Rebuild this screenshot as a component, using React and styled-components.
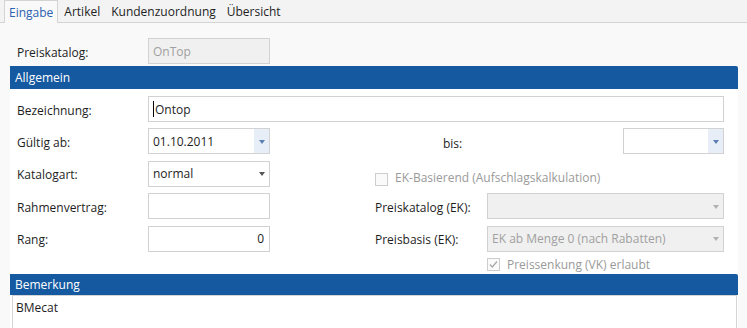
import React from "react";
import styled, { createGlobalStyle } from "styled-components";

const GlobalStyle = createGlobalStyle`
  html, body {
    margin: 0;
    padding: 0;
    background: #f9f9f9;
  }
  body {
    font-family: "Open Sans", "Noto Sans", sans-serif;
    font-size: 12px;
    color: #1e1e1e;
  }
`;

const Page = styled.div`
  width: 747px;
  height: 328px;
  overflow: hidden;
  background: #f9f9f9;
`;

const TabBar = styled.div`
  display: flex;
  gap: 1px;
  height: 22px;
  padding-left: 4px;
  background: #f3f3f3;
  border-bottom: 1px solid #d4d4d4;
`;

const Tab = styled.div`
  display: flex;
  align-items: center;
  padding: 0 4px;
  height: ${(p) => (p.$active ? "23px" : "22px")};
  box-sizing: border-box;
  color: ${(p) => (p.$active ? "#2a62b0" : "#1e1e1e")};
  background: ${(p) => (p.$active ? "#f9f9f9" : "transparent")};
  border: 1px solid ${(p) => (p.$active ? "#d4d4d4" : "transparent")};
  border-bottom: none;
`;

const TopRow = styled.div`
  display: grid;
  grid-template-columns: 131px 122px;
  align-items: center;
  padding: 15px 0 2px 17px;
`;

const Section = styled.div`
  margin: 0 9px 0 10px;
  background: #fff;
`;

const SectionHeader = styled.div`
  height: ${(p) => p.$h || 23}px;
  display: flex;
  align-items: center;
  padding-left: 5px;
  background: #1559a0;
  color: #fff;
  border-top-right-radius: 2px;
`;

const Form = styled.div`
  display: grid;
  grid-template-columns: 131px 122px 105px 112px 237px;
  grid-auto-rows: ${(p) => p.$row || 26}px;
  row-gap: 6.4px;
  padding: ${(p) => p.$top ?? 7}px 14px 4px 7px;
`;

const Label = styled.div`
  display: flex;
  align-items: center;
  padding-top: ${(p) => p.$drop || 2}px;
  padding-left: ${(p) => p.$indent || 0}px;
  grid-column: ${(p) => p.$col || "auto"};
`;

const Field = styled.div`
  position: relative;
  display: flex;
  align-items: center;
  box-sizing: border-box;
  height: 26px;
  width: ${(p) => (p.$w ? `${p.$w}px` : "auto")};
  justify-self: ${(p) => (p.$right ? "end" : "stretch")};
  grid-column: ${(p) => p.$col || "auto"};
  justify-content: ${(p) => (p.$alignRight ? "flex-end" : "flex-start")};
  padding: 0 ${(p) => (p.$alignRight ? "5px" : "4px")} 0 4px;
  border: 1px solid #d2d2d2;
  background: ${(p) => (p.$disabled ? "#f0f0f0" : "#fff")};
  color: ${(p) => (p.$disabled ? "#a0a0a0" : "#1e1e1e")};
`;

const Caret = styled.span`
  width: 1px;
  height: 16px;
  background: #000;
  margin-right: 1px;
`;

const DropButton = styled.div`
  position: absolute;
  top: 0;
  right: 0;
  bottom: 0;
  width: 15px;
  display: flex;
  align-items: center;
  justify-content: center;
  background: ${(p) => (p.$tinted ? "#e7eef7" : "transparent")};
`;

const Arrow = styled.span`
  width: 0;
  height: 0;
  border-left: 3.5px solid transparent;
  border-right: 3.5px solid transparent;
  border-top: 4px solid ${(p) => p.$color};
  margin-top: 1px;
`;

const CheckRow = styled.div`
  display: flex;
  align-items: ${(p) => (p.$bottom ? "flex-end" : "center")};
  gap: 7px;
  grid-column: ${(p) => p.$col || "auto"};
  color: #9a9a9a;
  padding-bottom: ${(p) => (p.$bottom ? "1px" : "0")};
`;

const Box = styled.span`
  width: 13px;
  height: 13px;
  box-sizing: border-box;
  border: 1px solid #cdcdcd;
  background: #fafafa;
  display: flex;
  align-items: center;
  justify-content: center;
`;

const NoteArea = styled.div`
  margin-left: 2px;
  margin-right: 1px;
  height: 40px;
  padding: 3px 3px;
  border: 1px solid #d4d4d4;
  border-bottom: none;
  background: #fff;
`;

function DropDown({ tinted, color = "#5b7fb4" }) {
  return (
    <DropButton $tinted={tinted}>
      <Arrow $color={color} />
    </DropButton>
  );
}

function Check({ checked }) {
  return (
    <Box>
      {checked && (
        <svg width="11" height="11" viewBox="0 0 11 11">
          <path d="M2 5.5 L4.3 8 L9 2.5" fill="none" stroke="#a8a8a8" strokeWidth="1.2" />
        </svg>
      )}
    </Box>
  );
}

export default function App() {
  return (
    <Page>
      <GlobalStyle />
      <TabBar>
        <Tab $active>Eingabe</Tab>
        <Tab>Artikel</Tab>
        <Tab>Kundenzuordnung</Tab>
        <Tab>Übersicht</Tab>
      </TabBar>

      <TopRow>
        <Label>Preiskatalog:</Label>
        <Field $disabled>OnTop</Field>
      </TopRow>

      <Section>
        <SectionHeader>Allgemein</SectionHeader>
        <Form>
          <Label>Bezeichnung:</Label>
          <Field $col="2 / 6">
            <Caret />
            Ontop
          </Field>

          <Label>Gültig ab:</Label>
          <Field>
            01.10.2011
            <DropDown tinted />
          </Field>
          <Label $col="4 / 5" $indent={68} $drop={5}>bis:</Label>
          <Field $w={101} $right>
            <DropDown tinted />
          </Field>

          <Label>Katalogart:</Label>
          <Field>
            normal
            <DropDown color="#555" />
          </Field>
          <CheckRow $col="4 / 6" $bottom>
            <Check />
            EK-Basierend (Aufschlagskalkulation)
          </CheckRow>

          <Label>Rahmenvertrag:</Label>
          <Field />
          <Label $col="4 / 5">Preiskatalog (EK):</Label>
          <Field $disabled>
            <DropDown color="#b0b0b0" />
          </Field>

          <Label>Rang:</Label>
          <Field $alignRight>0</Field>
          <Label $col="4 / 5">Preisbasis (EK):</Label>
          <Field $disabled>
            EK ab Menge 0 (nach Rabatten)
            <DropDown color="#b0b0b0" />
          </Field>
        </Form>
        <Form $row={14} $top={2} style={{ paddingBottom: "2px" }}>
          <CheckRow $col="5 / 6">
            <Check checked />
            Preissenkung (VK) erlaubt
          </CheckRow>
        </Form>
        <SectionHeader $h={21}>Bemerkung</SectionHeader>
        <NoteArea>BMecat</NoteArea>
      </Section>
    </Page>
  );
}
